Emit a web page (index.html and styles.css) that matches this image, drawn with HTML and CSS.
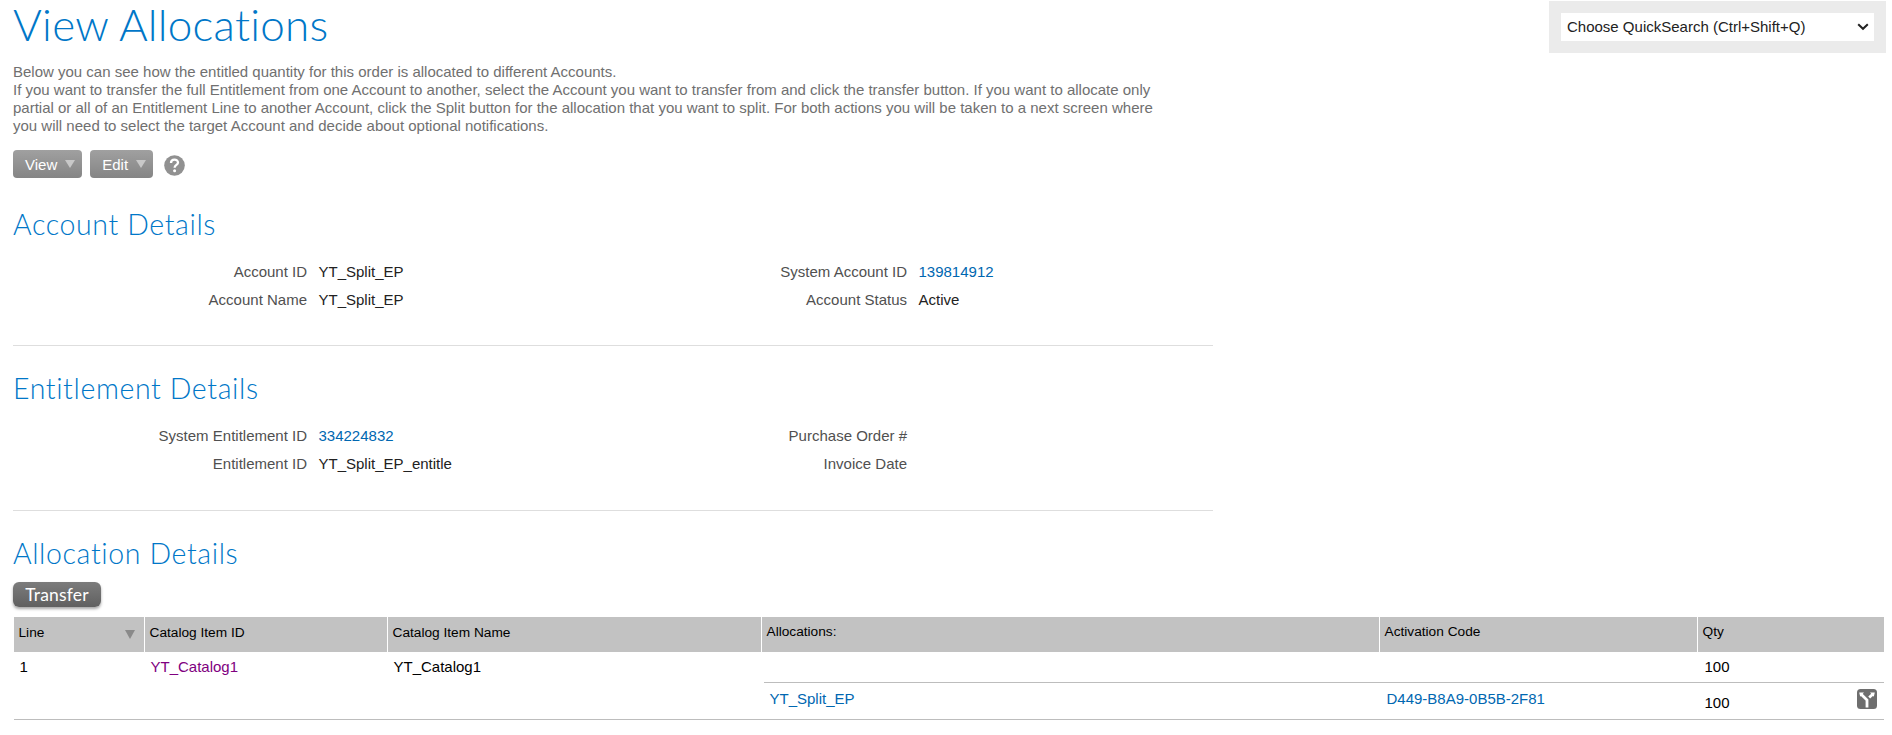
FILE: index.html
```html
<!DOCTYPE html>
<html lang="en">
<head>
    <meta charset="UTF-8">
    <meta name="viewport" content="width=device-width, initial-scale=1.0">
    <title>View Allocations</title>
    <link rel="stylesheet" href="styles.css">
</head>
<body>
    <div class="top">
        <h1>View Allocations</h1>
        <div class="quicksearch">
            <div class="quicksearch-select">
                <span>Choose QuickSearch (Ctrl+Shift+Q)</span>
                <svg class="chevron" width="12" height="8" viewBox="0 0 12 8"><path d="M1.2 1.2 L6 5.8 L10.8 1.2" fill="none" stroke="#222" stroke-width="2"/></svg>
            </div>
        </div>
    </div>

    <p class="intro">
        Below you can see how the entitled quantity for this order is allocated to different Accounts.<br>
        If you want to transfer the full Entitlement from one Account to another, select the Account you want to transfer from and click the transfer button. If you want to allocate only<br>
        partial or all of an Entitlement Line to another Account, click the Split button for the allocation that you want to split. For both actions you will be taken to a next screen where<br>
        you will need to select the target Account and decide about optional notifications.
    </p>

    <div class="toolbar">
        <div class="menu-btn">View <span class="arrow"></span></div>
        <div class="menu-btn">Edit <span class="arrow"></span></div>
        <svg class="help" width="21" height="21" viewBox="0 0 21 21">
            <circle cx="10.5" cy="10.5" r="10.3" fill="#919191"/>
            <path d="M7 8 C7 3.4 14 3.6 14 7.6 C14 10 10.6 9.9 10.6 12.8" fill="none" stroke="#fff" stroke-width="2.3"/>
            <circle cx="10.6" cy="15.8" r="1.5" fill="#fff"/>
        </svg>
    </div>

    <div class="section">
        <h2>Account Details</h2>
        <div class="fields">
            <div class="label">Account ID</div><div class="value">YT_Split_EP</div>
            <div class="label">System Account ID</div><div class="value"><a href="#">139814912</a></div>
            <div class="label">Account Name</div><div class="value">YT_Split_EP</div>
            <div class="label">Account Status</div><div class="value">Active</div>
        </div>
    </div>

    <div class="section">
        <h2>Entitlement Details</h2>
        <div class="fields">
            <div class="label">System Entitlement ID</div><div class="value"><a href="#">334224832</a></div>
            <div class="label">Purchase Order #</div><div class="value"></div>
            <div class="label">Entitlement ID</div><div class="value">YT_Split_EP_entitle</div>
            <div class="label">Invoice Date</div><div class="value"></div>
        </div>
    </div>

    <h2>Allocation Details</h2>
    <button class="transfer">Transfer</button>

    <div class="grid">
        <div class="grid-row grid-head">
            <div class="sorted">Line <span class="arrow"></span></div>
            <div>Catalog Item ID</div>
            <div>Catalog Item Name</div>
            <div class="alloc">Allocations:</div>
            <div class="alloc">Activation Code</div>
            <div class="alloc">Qty</div>
        </div>
        <div class="grid-row grid-line">
            <div>1</div>
            <div><a class="visited" href="#">YT_Catalog1</a></div>
            <div>YT_Catalog1</div>
            <div></div>
            <div></div>
            <div class="qty">100</div>
        </div>
        <div class="grid-sub">
            <div><a href="#">YT_Split_EP</a></div>
            <div class="code"><a href="#">D449-B8A9-0B5B-2F81</a></div>
            <div class="sub-qty">
                <span>100</span>
                <svg class="split" width="20" height="20" viewBox="0 0 20 20">
                    <rect width="20" height="20" rx="3.5" fill="#6e6e6e"/>
                    <path d="M10 18.5 V11 L4.4 5.4 M12.2 8.6 L16 5" fill="none" stroke="#fff" stroke-width="2.8"/>
                    <path d="M2.2 3.4 L7 3.6 L3.2 7.8 Z M17.8 3.4 L13 3.6 L16.8 7.8 Z" fill="#fff"/>
                </svg>
            </div>
        </div>
    </div>
</body>
</html>
```
FILE: styles.css
```css
* {
    box-sizing: border-box;
}
body {
    margin: 0;
    padding: 1px 6px 0 13px;
    font-family: Arial, "Liberation Sans", sans-serif;
    font-size: 15px;
    line-height: 18px;
    color: #222;
    background-color: #fff;
}
a {
    color: #0067b1;
    text-decoration: none;
}
a.visited {
    color: #800080;
}
h1, h2 {
    margin: 0;
    font-family: Lato, sans-serif;
    font-weight: 300;
    font-variant-ligatures: none;
    color: #0077c8;
}
h1 {
    font-size: 44px;
    line-height: 47px;
    letter-spacing: 0.25px;
}
h2 {
    font-size: 28.5px;
    line-height: 36px;
    letter-spacing: 0.62px;
}
.top {
    display: flex;
    justify-content: space-between;
    height: 62px;
}
.quicksearch {
    width: 337px;
    height: 52px;
    padding: 12px;
    background-color: #ebebeb;
}
.quicksearch-select {
    display: flex;
    justify-content: space-between;
    align-items: center;
    height: 28px;
    padding: 0 5px 0 6px;
    background-color: #fff;
}
.intro {
    margin: 0;
    color: #707070;
    white-space: nowrap;
}
.toolbar {
    display: flex;
    margin-top: 15px;
    height: 28px;
}
.menu-btn {
    display: flex;
    justify-content: space-between;
    height: 28px;
    margin-right: 8px;
    padding: 6px 7px 0 12px;
    gap: 8px;
    border-radius: 4px;
    background: linear-gradient(#a0a0a0, #858585);
    color: #fff;
}
.arrow {
    width: 0;
    height: 0;
    margin-top: 4px;
    border-left: 5px solid transparent;
    border-right: 5px solid transparent;
    border-top: 8px solid #c8c8c8;
}
.help {
    margin: 5px 0 0 3px;
}
.section {
    width: 1200px;
    height: 165px;
    border-bottom: 1px solid #dedede;
}
.toolbar + .section {
    height: 164px;
    margin-top: 4px;
}
h2 {
    padding-top: 24px;
    height: 60px;
}
.fields {
    display: grid;
    grid-template-columns: 294px 306px 294px 306px;
    grid-auto-rows: 28px;
    padding-top: 21px;
}
.label {
    text-align: right;
    color: #505050;
}
.value {
    padding-left: 11.5px;
}
.transfer {
    display: block;
    width: 88px;
    height: 25px;
    margin: 11px 0 10px;
    padding: 0;
    border: none;
    border-radius: 6px;
    background: linear-gradient(#7c7c7c, #606060);
    box-shadow: 0 2px 3px rgba(0, 0, 0, 0.35);
    font-family: Lato, sans-serif;
    font-size: 17.5px;
    line-height: 23px;
    letter-spacing: 0.2px;
    color: #fff;
}
.grid {
    width: 1870px;
    margin-left: 1px;
    border-bottom: 1px solid #bdbdbd;
    color: #000;
}
.grid-row {
    display: grid;
    grid-template-columns: 131px 243px 374px 618px 318px 186px;
}
.grid-head > div {
    height: 35px;
    padding: 7px 4.5px 0;
    border-right: 1px solid #fff;
    background-color: #c2c2c2;
    font-size: 13.7px;
}
.grid-head > div:last-child {
    border-right: none;
}
.grid-head > .alloc {
    padding-top: 6px;
}
.grid-head .sorted {
    display: flex;
    justify-content: space-between;
    padding-right: 9px;
}
.sorted .arrow {
    margin-top: 6px;
    border-top: 9px solid #8a8a8a;
}
.grid-line {
    height: 30px;
}
.grid-line > div {
    padding: 6px 5.5px 0;
}
.grid-line > .qty {
    padding-left: 6.5px;
}
.grid-sub {
    display: grid;
    grid-template-columns: 616px 318px 186px;
    height: 37px;
    margin-left: 750px;
    border-top: 1px solid #bdbdbd;
}
.grid-sub > div {
    padding: 7px 5.5px 0;
}
.grid-sub > .code {
    padding-left: 6.5px;
}
.grid-sub > .sub-qty {
    display: flex;
    justify-content: space-between;
    padding: 6px 7px 0 6.5px;
}
.sub-qty span {
    margin-top: 5px;
}
```
